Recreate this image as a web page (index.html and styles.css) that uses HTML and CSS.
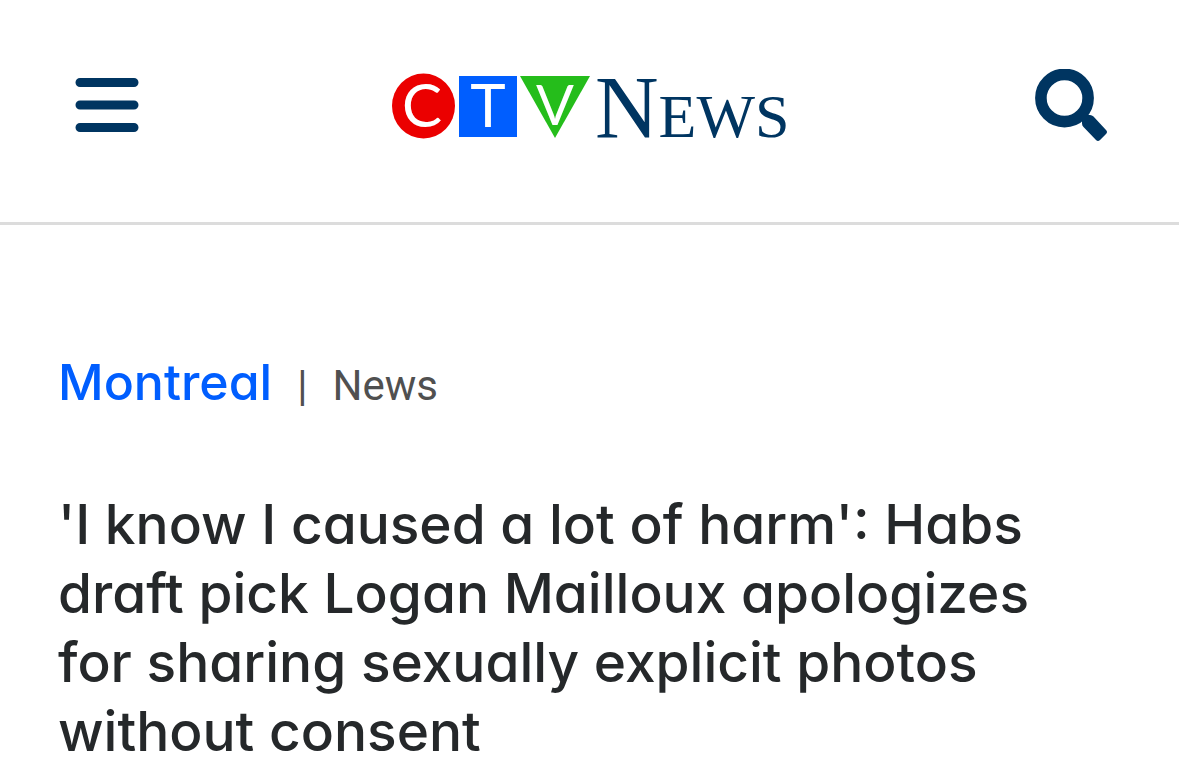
FILE: index.html
```html
<!DOCTYPE html>
<html lang="en">
<head>
    <meta charset="UTF-8">
    <meta name="viewport" content="width=device-width, initial-scale=1.0">
    <title>CTV News</title>
    <link rel="stylesheet" href="styles.css">
</head>
<body>
    <!-- Header -->
    <header class="site-header">
        <button class="icon-btn" type="button" aria-label="Menu">
            <svg width="72" height="72" viewBox="0 0 72 72">
                <path d="M8 13.5H62M8 36H62M8 58.5H62" stroke="#003561" stroke-width="9" stroke-linecap="round"/>
            </svg>
        </button>

        <a class="logo" href="#" aria-label="CTV News">
            <svg width="396" height="112" viewBox="0 -20 396 112">
                <ellipse cx="31.5" cy="37" rx="31.5" ry="32.5" fill="#eb0000"/>
                <rect x="67" y="7" width="58" height="61" fill="#005eff"/>
                <path d="M128 7H198L163 69Z" fill="#25bd1b"/>
                <text class="logo-letter" x="30" y="58">C</text>
                <text class="logo-letter" x="96" y="58">T</text>
                <text class="logo-letter logo-v" x="163" y="56">V</text>
                <text class="logo-news" x="203" y="68">N<tspan class="logo-small">EWS</tspan></text>
            </svg>
        </a>

        <button class="icon-btn" type="button" aria-label="Search">
            <svg width="72" height="72" viewBox="0 0 72 72">
                <circle cx="29.5" cy="29" r="23.6" fill="none" stroke="#003561" stroke-width="11.6"/>
                <path d="M44 49L50 43L53 46H55Q57 46 58.5 47.5L71 61Q73 63 71 65L65 71Q63 73 61 71L48.5 58Q47 56.5 47 54.5V52Z" fill="#003561"/>
            </svg>
        </button>
    </header>

    <!-- Article -->
    <main class="article">
        <nav class="breadcrumb" aria-label="Section">
            <a class="region" href="#">Montreal</a>
            <span class="divider">|</span>
            <span>News</span>
        </nav>
        <h1>'I know I caused a lot of harm': Habs draft pick Logan Mailloux apologizes for sharing sexually explicit photos without consent</h1>
    </main>
</body>
</html>
```
FILE: styles.css
```css
* {
    margin: 0;
    padding: 0;
    box-sizing: border-box;
}

body {
    background: #fff;
    color: #25282a;
    font-family: Inter, "Liberation Sans", sans-serif;
}

/* ===== HEADER ===== */
.site-header {
    display: flex;
    justify-content: space-between;
    align-items: center;
    padding: 49px 72px 61px;
    border-bottom: 3px solid #dcdcdc;
}

.icon-btn {
    background: none;
    border: none;
    cursor: pointer;
}

.icon-btn svg,
.logo svg {
    display: block;
}

.logo-letter {
    font-family: Lato, sans-serif;
    font-size: 60px;
    fill: #fff;
    text-anchor: middle;
}

.logo-v {
    font-size: 56px;
}

.logo-news {
    font-family: "Liberation Serif", serif;
    font-size: 88px;
    fill: #003561;
}

.logo-small {
    font-size: 62px;
}

/* ===== ARTICLE ===== */
.article {
    padding: 125px 72px 24px 58px;
}

.breadcrumb {
    display: flex;
    align-items: baseline;
    gap: 25px;
    margin-bottom: 72px;
    color: #505050;
    font-family: Roboto, sans-serif;
    font-size: 42px;
    line-height: 64px;
}

.region {
    color: #005eff;
    font-family: Inter, sans-serif;
    font-size: 50px;
    font-weight: 500;
    font-feature-settings: "cv11";
    text-decoration: none;
}

h1 {
    font-size: 55px;
    font-weight: 500;
    font-feature-settings: "cv11";
    line-height: 69px;
}
```
